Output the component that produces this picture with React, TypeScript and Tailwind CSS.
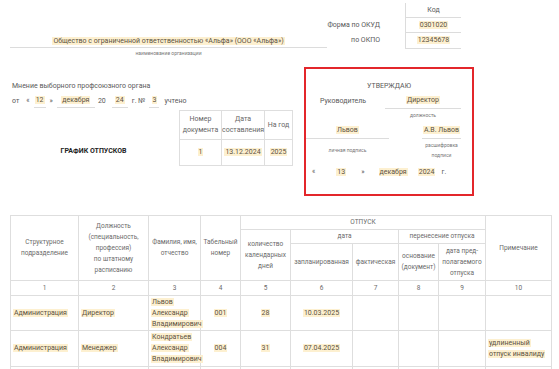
import React from "react";

function Hl({ children }: { children: React.ReactNode }) {
    return <span className="bg-[#fdf0d0] px-[1px] text-[#5b513f]">{children}</span>;
}

const cell = "border border-[#dedede] text-center align-middle px-[2px]";
const hcell = "border border-[#dedede] text-center align-middle px-0";

export default function App() {
    return (
        <div className="w-[559px] h-[369px] overflow-hidden bg-white text-[7px] leading-[10px] text-[#595959] font-['Roboto','Noto_Sans',sans-serif]">

            {/* Header: organization and codes */}

            <div className="flex h-[60px]">

                <div className="ml-[10px] mt-[34px] w-[317px]">
                    <div className="h-[14px] leading-[14px] border-b border-[#dcdcdc] text-center">
                        <Hl>Общество с ограниченной ответственностью «Альфа» (ООО «Альфа»)</Hl>
                    </div>
                    <div className="mt-[1px] text-center text-[5px] leading-[8px] text-[#777]">
                        наименование организации
                    </div>
                </div>

                <div className="mt-[18px] w-[53px] flex flex-col items-end whitespace-nowrap">
                    <div className="h-[15px] leading-[15px]">Форма по ОКУД</div>
                    <div className="h-[15px] leading-[15px]">по ОКПО</div>
                </div>

                <div className="ml-[25px] mt-[3px] w-[56px] border-l border-[#dcdcdc] h-[46px]">
                    <div className="h-[15px] leading-[15px] text-center border-b border-[#dcdcdc]">Код</div>
                    <div className="h-[15px] leading-[15px] text-center border-b border-[#dcdcdc]"><Hl>0301020</Hl></div>
                    <div className="h-[16px] leading-[15px] text-center border-b border-[#dcdcdc]"><Hl>12345678</Hl></div>
                </div>

            </div>

            {/* Middle: union opinion, title, approval */}

            <div className="flex h-[141px]">

                <div className="w-[293px] pl-[12px]">

                    <div className="mt-[21px] h-[10px]">Мнение выборного профсоюзного органа</div>

                    <div className="mt-[3px] h-[14px] flex items-end whitespace-nowrap">
                        <span className="pb-[2px]">от</span>
                        <span className="ml-[7px] pb-[2px]">«</span>
                        <span className="ml-[4px] w-[12px] border-b border-[#dcdcdc] text-center pb-[2px]"><Hl>12</Hl></span>
                        <span className="ml-[4px] pb-[2px]">»</span>
                        <span className="ml-[4px] w-[38px] border-b border-[#dcdcdc] text-center pb-[2px]"><Hl>декабря</Hl></span>
                        <span className="ml-[3px] pb-[2px]">20</span>
                        <span className="ml-[6px] w-[16px] border-b border-[#dcdcdc] text-center pb-[2px]"><Hl>24</Hl></span>
                        <span className="ml-[4px] pb-[2px]">г. №</span>
                        <span className="ml-[4px] w-[10px] border-b border-[#dcdcdc] text-center pb-[2px]"><Hl>3</Hl></span>
                        <span className="ml-[5px] pb-[2px]">учтено</span>
                    </div>

                    <div className="mt-[2px] flex">

                        <div className="w-[164px] pt-[36px] text-center font-bold text-[#222]">
                            ГРАФИК ОТПУСКОВ
                        </div>

                        <table className="ml-[4px] border-collapse table-fixed w-[113px] text-[7px] leading-[11px]">
                            <colgroup>
                                <col className="w-[42px]" />
                                <col className="w-[43px]" />
                                <col className="w-[28px]" />
                            </colgroup>
                            <tbody>
                                <tr className="h-[29px] text-[#666]">
                                    <td className={hcell}>Номер<br />документа</td>
                                    <td className={hcell}>Дата<br />составления</td>
                                    <td className={hcell}>На год</td>
                                </tr>
                                <tr className="h-[26px]">
                                    <td className={cell}><Hl>1</Hl></td>
                                    <td className={cell}><Hl>13.12.2024</Hl></td>
                                    <td className={cell}><Hl>2025</Hl></td>
                                </tr>
                            </tbody>
                        </table>

                    </div>

                </div>

                <div className="ml-[11px] mt-[7px] w-[170px] h-[129px] border-2 border-[#e3262b]">

                    <div className="mt-[12px] h-[10px] text-center">УТВЕРЖДАЮ</div>

                    <div className="mt-[4px] flex items-end h-[14px]">
                        <div className="pl-[14px] w-[79px] pb-[3px]">Руководитель</div>
                        <div className="w-[76px] border-b border-[#dcdcdc] text-center pb-[3px]"><Hl>Директор</Hl></div>
                    </div>

                    <div className="flex h-[8px] mt-[2px]">
                        <div className="ml-[79px] w-[76px] text-center text-[5px] leading-[8px] text-[#777]">должность</div>
                    </div>

                    <div className="mt-[6px] flex items-end h-[14px]">
                        <div className="w-[83px] border-b border-[#dcdcdc] text-center pb-[3px]"><Hl>Львов</Hl></div>
                        <div className="ml-[33px] w-[39px] border-b border-[#dcdcdc] text-center pb-[3px] whitespace-nowrap"><Hl>А.В. Львов</Hl></div>
                    </div>

                    <div className="flex h-[21px] text-[5px] leading-[10px] text-[#777]">
                        <div className="w-[83px] flex items-center justify-center pt-[1px]">личная подпись</div>
                        <div className="ml-[33px] w-[39px] text-center pt-[1px]">расшифровка подписи</div>
                    </div>

                    <div className="mt-[7px] h-[10px] flex whitespace-nowrap">
                        <span className="ml-[6px]">«</span>
                        <span className="ml-[8px] w-[36px] text-center"><Hl>13</Hl></span>
                        <span className="ml-[2px]">»</span>
                        <span className="ml-[14px]"><Hl>декабря</Hl></span>
                        <span className="ml-[10px]"><Hl>2024</Hl></span>
                        <span className="ml-[6px]">г.</span>
                    </div>

                </div>

            </div>

            {/* Schedule table */}

            <div className="pl-[10px] pt-[14px]">
                <table className="border-collapse table-fixed w-[541px] text-[7px] leading-[11px]">
                    <colgroup>
                        <col className="w-[68px]" />
                        <col className="w-[70px]" />
                        <col className="w-[52px]" />
                        <col className="w-[40px]" />
                        <col className="w-[50px]" />
                        <col className="w-[62px]" />
                        <col className="w-[46px]" />
                        <col className="w-[40px]" />
                        <col className="w-[47px]" />
                        <col className="w-[66px]" />
                    </colgroup>
                    <thead className="text-[#6a6a6a] text-[6.5px]">
                        <tr className="h-[14px]">
                            <td rowSpan={3} className={hcell}>Структурное<br />подразделение</td>
                            <td rowSpan={3} className={hcell}>Должность<br />(специальность,<br />профессия)<br />по штатному<br />расписанию</td>
                            <td rowSpan={3} className={hcell}>Фамилия, имя,<br />отчество</td>
                            <td rowSpan={3} className={hcell}>Табельный<br />номер</td>
                            <td colSpan={5} className={hcell}>ОТПУСК</td>
                            <td rowSpan={3} className={hcell}>Примечание</td>
                        </tr>
                        <tr className="h-[14px]">
                            <td rowSpan={2} className={hcell}>количество<br />календарных<br />дней</td>
                            <td colSpan={2} className={hcell}>дата</td>
                            <td colSpan={2} className={hcell}>перенесение отпуска</td>
                        </tr>
                        <tr className="h-[37px]">
                            <td className={hcell}>запланированная</td>
                            <td className={hcell}>фактическая</td>
                            <td className={hcell}>основание<br />(документ)</td>
                            <td className={hcell}>дата пред-<br />полагаемого<br />отпуска</td>
                        </tr>
                        <tr className="h-[15px]">
                            {[1, 2, 3, 4, 5, 6, 7, 8, 9, 10].map(n => (
                                <td key={n} className={hcell}>{n}</td>
                            ))}
                        </tr>
                    </thead>
                    <tbody>
                        <tr className="h-[35px]">
                            <td className={`${cell} text-left`}><Hl>Администрация</Hl></td>
                            <td className={`${cell} text-left`}><Hl>Директор</Hl></td>
                            <td className={`${cell} text-left`}><Hl>Львов</Hl><br /><Hl>Александр</Hl><br /><Hl>Владимирович</Hl></td>
                            <td className={cell}><Hl>001</Hl></td>
                            <td className={cell}><Hl>28</Hl></td>
                            <td className={cell}><Hl>10.03.2025</Hl></td>
                            <td className={cell}></td>
                            <td className={cell}></td>
                            <td className={cell}></td>
                            <td className={cell}></td>
                        </tr>
                        <tr className="h-[36px]">
                            <td className={`${cell} text-left`}><Hl>Администрация</Hl></td>
                            <td className={`${cell} text-left`}><Hl>Менеджер</Hl></td>
                            <td className={`${cell} text-left`}><Hl>Кондратьев</Hl><br /><Hl>Александр</Hl><br /><Hl>Владимирович</Hl></td>
                            <td className={cell}><Hl>004</Hl></td>
                            <td className={cell}><Hl>31</Hl></td>
                            <td className={cell}><Hl>07.04.2025</Hl></td>
                            <td className={cell}></td>
                            <td className={cell}></td>
                            <td className={cell}></td>
                            <td className={`${cell} text-left`}><Hl>удлиненный</Hl><br /><Hl>отпуск инвалиду</Hl></td>
                        </tr>
                        <tr className="h-[35px]">
                            <td className={cell}></td>
                            <td className={cell}></td>
                            <td className={cell}></td>
                            <td className={cell}></td>
                            <td className={cell}></td>
                            <td className={cell}></td>
                            <td className={cell}></td>
                            <td className={cell}></td>
                            <td className={cell}></td>
                            <td className={cell}></td>
                        </tr>
                    </tbody>
                </table>
            </div>

        </div>
    );
}
